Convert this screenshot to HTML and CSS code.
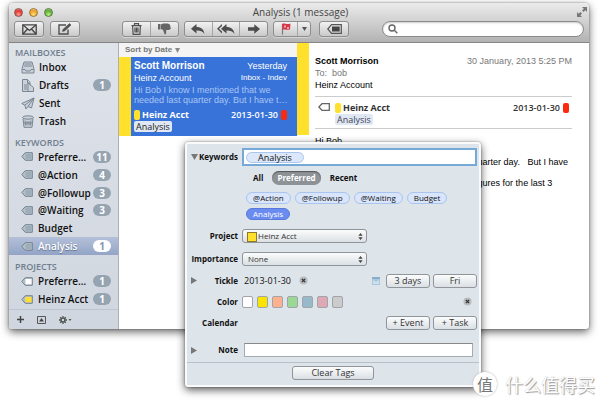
FILE: index.html
```html
<!DOCTYPE html>
<html lang="en">
<head>
<meta charset="utf-8">
<title>Analysis (1 message)</title>
<link rel="stylesheet" href="styles.css">
</head>
<body>
<svg class="defs" aria-hidden="true">
  <symbol id="tag" viewBox="0 0 12 9"><path d="M4.2.7h7.1v7.6H4.2L.8 4.5z" fill="#b3bfc9" stroke="#748391"/><path d="M4.5 2h6v5.2h-6z" fill="var(--tag, #9eadb8)"/></symbol>
  <symbol id="updown" viewBox="0 0 5 7"><path d="M2.5 0 4.6 2.7H.4zM2.5 7 4.6 4.3H.4z" fill="#444"/></symbol>
  <symbol id="clear" viewBox="0 0 10 10"><circle cx="5" cy="5" r="4.5" fill="#b9bcbe"/><path d="m3.2 3.2 3.6 3.6M6.8 3.2 3.2 6.8" stroke="#333" stroke-width="1.5"/></symbol>
</svg>

<main class="window">
  <header class="toolbar">
    <div class="titlebar">
      <div class="lights">
        <button class="light red" aria-label="Close"></button>
        <button class="light amber" aria-label="Minimize"></button>
        <button class="light green" aria-label="Zoom"></button>
      </div>
      <h1>Analysis (1 message)</h1>
      <button class="fullscreen" aria-label="Full screen">
        <svg width="10" height="10" viewBox="0 0 10 10" fill="#777"><path d="M5 0h5v5L8.300 3.300 6.500 5 5 3.500l1.800-1.800zM0 5l1.700 1.700L3.500 5 5 6.500 3.300 8.300 5 10H0z"/></svg>
      </button>
    </div>
    <div class="tools">
      <div class="group mail"><button aria-label="Get mail">
        <svg width="15" height="11" viewBox="0 0 15 11" fill="none" stroke="#444" stroke-width="1.300"><path d="M.8.8h13.400v9.400H.8z"/><path d="m1 1 6.500 5.500L14 1M1 10l4.500-5M14 10 9.500 5"/></svg></button></div>
      <div class="group compose"><button aria-label="New message">
        <svg width="14" height="12" viewBox="0 0 14 12" fill="none" stroke="#505050" stroke-width="1.400"><path d="M8 2H1v9h9V6.500"/><path d="m4.500 8.500.7-2.300L11.500.5 13 2 6.800 7.800z" fill="#505050" stroke-width=".6"/></svg></button></div>
      <div class="group remove"><button aria-label="Delete">
        <svg width="11" height="12" viewBox="0 0 11 12" fill="none" stroke="#505050" stroke-width="1.200"><path d="M.5 2.600h10M3.500 2.400V.7h4v1.700M1.600 3l.5 8.300h6.800L9.400 3M4 4.500v5M5.500 4.500v5M7 4.500v5"/></svg></button><button aria-label="Junk">
        <svg width="13" height="12" viewBox="0 0 13 12" fill="#666"><path d="M0 1h2.500v5.500H0zM3 1.500 5 .5h5l2 1.200.8 4L11 7H8.300L8 11.500 6.500 11 5 7 3 6z"/></svg></button></div>
      <div class="group reply"><button aria-label="Reply">
        <svg width="14" height="11" viewBox="0 0 14 11" fill="#4d4d4d"><path d="M5.500 0v3C10 3 13 5.500 13.500 10 11.500 7.200 9 6.500 5.500 6.600V9.500L0 4.800z"/></svg></button><button aria-label="Reply all">
        <svg width="18" height="11" viewBox="0 0 18 11" fill="#4d4d4d"><path d="M9.500 0v3C14 3 17 5.500 17.500 10 15.500 7.200 13 6.500 9.500 6.600V9.500L4 4.800zM5 0v2L2 4.800l3 2.800v1.900L0 4.800z"/></svg></button><button aria-label="Forward">
        <svg width="12" height="10" viewBox="0 0 12 10" fill="#4d4d4d"><path d="M0 3.300h6.300V.3L12 5 6.300 9.700v-3H0z"/></svg></button></div>
      <div class="group flag"><button aria-label="Flag">
        <svg width="10" height="12" viewBox="0 0 10 12"><path d="M1.500 1v10.500" stroke="#777" stroke-width="1.200"/><path d="M1 1c3-1.500 4 1 8.500-.5L9 6.500c-3.500 1-4.500-.8-7.500.5z" fill="#d8394a"/><path d="M3 2.500h2v2H3zM6 4h2v2H6z" fill="#f3a4aa"/></svg></button><button class="more" aria-label="Flag colours">
        <svg width="5" height="4" viewBox="0 0 5 4"><path d="M0 0h5L2.500 4z" fill="#555"/></svg></button></div>
      <div class="group tagger"><button aria-label="Tags">
        <svg width="15" height="10" viewBox="0 0 15 10"><path d="M4.500.7h9.800v8.600H4.500L.8 5z" fill="none" stroke="#555" stroke-width="1.200"/><path d="M5 2.400h7.700v5.200H5z" fill="#444"/></svg></button></div>
      <label class="search">
        <svg width="10" height="10" viewBox="0 0 10 10" fill="none" stroke="#666" stroke-width="1.400"><circle cx="4" cy="4" r="3"/><path d="m6.300 6.300 3 3"/></svg>
        <input type="search" aria-label="Search">
      </label>
    </div>
  </header>

  <div class="panes">
    <aside class="sidebar">
      <h2>MAILBOXES</h2>
      <ul class="mailboxes">
        <li><svg width="14" height="13" viewBox="0 0 14 13" fill="#cbd2db" stroke="#7a8591"><path d="m3 1h8l2 7v4H1V8z"/><path d="M3.500 3h7M3 5h8M1.500 8.500H4l1 1.500h4l1-1.500h2.500"/></svg><a href="#inbox">Inbox</a></li>
        <li><svg width="14" height="13" viewBox="0 0 14 13" fill="#cbd2db" stroke="#7a8591"><path d="M1.500.5h5l2.500 3v9h-7.500z"/><path d="m7 4 5.500 4.500v4H7zM6.500.5V4H9M3 6h3M3 8h3M3 10h3"/></svg><a href="#drafts">Drafts</a><span class="count">1</span></li>
        <li><svg width="14" height="13" viewBox="0 0 14 13" fill="#cbd2db" stroke="#7a8591"><path d="M13 1 .8 6.500l3 1.700L5 12l2-2.500L10.500 11z"/><path d="M13 1 3.800 8.200M13 1 7 9.500"/></svg><a href="#sent">Sent</a></li>
        <li><svg width="14" height="13" viewBox="0 0 14 13" fill="#cbd2db" stroke="#7a8591"><path d="M2 3.500 3 12.300h8l1-8.800"/><ellipse cx="7" cy="2.500" rx="5.500" ry="1.700"/><path d="m4 5.500.5 5M6 6v4.500M8 6v4.500M10 5.500l-.5 5M3 8h8"/></svg><a href="#trash">Trash</a></li>
      </ul>
      <h2>KEYWORDS</h2>
      <ul class="keywords">
        <li><svg class="tag"><use href="#tag"/></svg><a href="#preferred">Preferre…</a><span class="count">11</span></li>
        <li><svg class="tag"><use href="#tag"/></svg><a href="#action">@Action</a><span class="count">4</span></li>
        <li><svg class="tag"><use href="#tag"/></svg><a href="#followup">@Followup</a><span class="count">3</span></li>
        <li><svg class="tag"><use href="#tag"/></svg><a href="#waiting">@Waiting</a><span class="count">3</span></li>
        <li><svg class="tag"><use href="#tag"/></svg><a href="#budget">Budget</a></li>
        <li class="selected"><svg class="tag"><use href="#tag"/></svg><a href="#analysis">Analysis</a><span class="count">1</span></li>
      </ul>
      <h2>PROJECTS</h2>
      <ul class="projects">
        <li><svg class="tag white"><use href="#tag"/></svg><a href="#project-preferred">Preferre…</a><span class="count">1</span></li>
        <li><svg class="tag yellow"><use href="#tag"/></svg><a href="#heinz">Heinz Acct</a><span class="count">1</span></li>
      </ul>
      <div class="sidebar-tools">
        <button aria-label="Add"><svg width="7" height="7" viewBox="0 0 7 7"><path d="M3.500 0v7M0 3.500h7" stroke="#444" stroke-width="1.500"/></svg></button>
        <button aria-label="Activity"><svg width="9" height="8" viewBox="0 0 9 8"><path d="M.5.5h8v7h-8z" fill="none" stroke="#555"/><path d="M4.500 2 7 5.500H2z" fill="#444"/></svg></button>
        <button aria-label="Actions"><svg width="13" height="8" viewBox="0 0 13 8"><circle cx="4" cy="4" r="2" fill="none" stroke="#555" stroke-width="1.600"/><path d="M4 0v1.600M4 6.400V8M0 4h1.600M6.400 4H8M1.200 1.200l1.100 1.100M5.700 5.700l1.100 1.100M1.200 6.800l1.100-1.100M5.700 2.300l1.100-1.100" stroke="#555" stroke-width="1.300"/><path d="M9.500 3h3L11 5z" fill="#555"/></svg></button>
      </div>
    </aside>

    <section class="list">
      <button class="sort">Sort by Date <svg width="5" height="5" viewBox="0 0 5 5"><path d="M0 0h5L2.500 5z" fill="#888"/></svg></button>
      <article class="message">
        <div class="line"><strong>Scott Morrison</strong><time>Yesterday</time></div>
        <div class="line"><span>Heinz Account</span><span class="box">Inbox - Indev</span></div>
        <p>Hi Bob I know I mentioned that we<br>needed last quarter day. But I have t…</p>
        <div class="meta"><i class="swatch"></i><b>Heinz Acct</b><time>2013-01-30</time><i class="swatch due"></i></div>
        <span class="label">Analysis</span>
      </article>
    </section>

    <section class="detail">
      <article class="content">
        <header class="mail-head">
          <div class="line"><strong>Scott Morrison</strong><time>30 January, 2013 5:25 PM</time></div>
          <div class="to">To:&nbsp; bob</div>
          <div>Heinz Account</div>
        </header>
        <div class="tagline">
          <svg width="12" height="8" viewBox="0 0 12 8"><path d="M4 .7h7.300v6.600H4L.8 4z" fill="#fff" stroke="#666" stroke-width="1.300"/></svg>
          <div class="tags">
            <div class="meta"><i class="swatch"></i><b>Heinz Acct</b><time>2013-01-30</time><i class="swatch due"></i></div>
            <span class="label">Analysis</span>
          </div>
        </div>
        <div class="body">
          <p>Hi Bob</p>
          <p>I know I mentioned that we wanted last quarter day. &nbsp; But I have</p>
          <p>my update to prepare and will need the figures for the last 3</p>
        </div>
      </article>
    </section>
  </div>
</main>

<form class="popup">
  <div class="fields">
    <div class="row row-keywords">
      <div class="name"><svg width="7" height="6" viewBox="0 0 7 6"><path d="M0 0h7L3.500 6z" fill="#777"/></svg><label for="keywords">Keywords</label></div>
      <div class="token-field"><span class="token">Analysis</span><input id="keywords" type="text"></div>
    </div>
    <div class="tabs"><button type="button">All</button><button type="button" class="on">Preferred</button><button type="button">Recent</button></div>
    <div class="chips">
      <button type="button">@Action</button><button type="button">@Followup</button><button type="button">@Waiting</button><button type="button">Budget</button><button type="button" class="on">Analysis</button>
    </div>
    <div class="row row-select">
      <div class="name"><label for="project">Project</label></div>
      <div class="select has-swatch"><select id="project"><option>Heinz Acct</option></select><svg><use href="#updown"/></svg></div>
    </div>
    <div class="row row-select">
      <div class="name"><label for="importance">Importance</label></div>
      <div class="select"><select id="importance"><option>None</option></select><svg><use href="#updown"/></svg></div>
    </div>
    <div class="row">
      <div class="name"><svg width="6" height="7" viewBox="0 0 6 7"><path d="M0 0v7l6-3.500z" fill="#777"/></svg><span>Tickle</span></div>
      <div class="cell"><time>2013-01-30</time><button type="button" class="clear" aria-label="Clear tickle date"><svg><use href="#clear"/></svg></button>
        <button type="button" class="calendar" aria-label="Pick a date"><svg width="8" height="8" viewBox="0 0 8 8"><path d="M0 0h8v8H0z" fill="#a9c7df"/><path d="M0 0h8v2H0z" fill="#88aecb"/><path d="m1 3 3 2 3-2v4H1z" fill="#cfdfeb"/></svg></button>
        <button type="button" class="push">3 days</button><button type="button" class="push">Fri</button></div>
    </div>
    <div class="row">
      <div class="name"><span>Color</span></div>
      <div class="cell colors"><button type="button" class="c-white" aria-label="White"></button><button type="button" class="c-yellow" aria-label="Yellow"></button><button type="button" class="c-orange" aria-label="Orange"></button><button type="button" class="c-green" aria-label="Green"></button><button type="button" class="c-blue" aria-label="Blue"></button><button type="button" class="c-pink" aria-label="Pink"></button><button type="button" class="c-gray" aria-label="Gray"></button><button type="button" class="clear end" aria-label="Clear color"><svg><use href="#clear"/></svg></button></div>
    </div>
    <div class="row">
      <div class="name"><span>Calendar</span></div>
      <div class="cell events"><button type="button" class="push">+ Event</button><button type="button" class="push">+ Task</button></div>
    </div>
    <div class="row row-note">
      <div class="name"><svg width="6" height="7" viewBox="0 0 6 7"><path d="M0 0v7l6-3.500z" fill="#777"/></svg><label for="note">Note</label></div>
      <div class="cell"><input id="note" class="note" type="text"></div>
    </div>
  </div>
  <footer><button type="button" class="push wide">Clear Tags</button></footer>
</form>

<div class="watermark"><span class="seal">值</span><span>什么值得买</span></div>
</body>
</html>
```
FILE: styles.css
```css
* { box-sizing: border-box; }
body {
  position: relative;
  margin: 0;
  padding: 3px 11px 0 9px;
  min-height: 100vh;
  background: #fff;
  color: #111;
  font: 10px/12px "Open Sans", "Noto Sans", sans-serif;
  white-space: nowrap;
  overflow: hidden;
}
h1, h2, p, ul { margin: 0; padding: 0; font-size: inherit; }
ul { list-style: none; }
a { color: inherit; text-decoration: none; }
button, input, select { font: inherit; color: inherit; margin: 0; padding: 0; border: 0; background: none; outline: 0; min-width: 0; }
button { white-space: nowrap; }
svg { display: block; flex: none; }
.defs { position: absolute; width: 0; height: 0; }

.window { border-radius: 4px 4px 3px 3px; box-shadow: 0 3px 8px rgba(0,0,0,.6), 0 0 2px rgba(0,0,0,.4); overflow: hidden; background: #fff; }
.toolbar { height: 40px; background: linear-gradient(#ebebeb, #d2d2d2 45%, #b2b2b2); border-bottom: 1px solid #858585; }
.titlebar { display: grid; grid-template-columns: 1fr auto 1fr; align-items: center; height: 18px; padding: 0 2px 0 5px; }
h1 { color: #444; font-weight: 500; }
.lights { display: flex; gap: 6px; }
.light { width: 9px; height: 9px; border-radius: 50%; border: 1px solid #8c5550; }
.red { background: radial-gradient(circle at 50% 80%, #ff9c90, #e0322d 60%, #f3b5b0); }
.amber { background: radial-gradient(circle at 50% 80%, #ffe277, #eb9d25 60%, #fae0a5); border-color: #9c7434; }
.green { background: radial-gradient(circle at 50% 80%, #c2ee86, #5ba836 60%, #cfe8b5); border-color: #55803f; }
.fullscreen { justify-self: end; }
.tools { display: flex; align-items: center; padding: 0 5px; }
.group { display: flex; height: 16px; border: 1px solid #8e8e8e; border-radius: 3px; background: linear-gradient(#f2f2f2, #c9c9c9); box-shadow: 0 1px 0 rgba(255,255,255,.4); }
.group button { display: flex; flex: 1; align-items: center; justify-content: center; }
.group button + button { border-left: 1px solid #a5a5a5; }
.mail, .compose, .tagger { width: 30px; }
.compose { margin-left: 6px; }
.remove { width: 57px; margin-left: 42px; }
.reply { width: 84px; margin-left: 5px; }
.flag { width: 38px; margin-left: 5px; }
.flag .more { flex: none; width: 13px; }
.tagger { margin-left: 8px; }
.search { display: flex; flex: 1; align-items: center; gap: 3px; height: 16px; margin-left: 33px; padding: 0 5px; border: 1px solid #8b8b8b; border-radius: 8px; background: #fff; box-shadow: inset 0 1px 2px rgba(0,0,0,.2); }
.search input { flex: 1; }

.panes { display: flex; min-height: 286px; }
.sidebar { display: flex; flex-direction: column; width: 110px; border-right: 1px solid #aab0b8; background: linear-gradient(#dfe3ea, #d0d6df); font-weight: 600; }
.sidebar h2 { padding: 0 6px; height: 15px; line-height: 19px; font-size: 9px; font-weight: 600; color: #6f7d8d; }
.sidebar li { display: flex; align-items: center; height: 18px; padding: 0 7px 0 12px; }
.sidebar a { flex: 1; padding-left: 5px; }
.sidebar .mailboxes a { padding-left: 4px; }
.mailboxes { margin-bottom: 3px; }
.keywords { display: grid; height: 107px; margin-bottom: 2px; }
.sidebar .keywords li { height: auto; }
.tag { width: 12px; height: 9px; }
.white { --tag: #fff; }
.yellow { --tag: #ffe02d; }
.count { width: 18px; height: 12px; border-radius: 6px; background: #96a4b2; color: #fff; font-weight: 700; text-align: center; }
.selected { background: linear-gradient(#b4c0d9, #93a4c6); color: #fff; text-shadow: 0 1px 1px #5d6c89; }
.selected .count { background: #fff; color: #8292b5; text-shadow: none; }
.sidebar-tools { display: flex; flex: 1; align-items: center; gap: 13px; margin-top: 1px; padding: 0 8px; border-top: 1px solid #bec6d4; }

.list { width: 178px; font-family: "Liberation Sans", sans-serif; font-size: 9px; line-height: 10px; }
.sort { display: flex; align-items: center; gap: 3px; width: 100%; height: 14px; padding: 0 6px; background: #f4f4f4; color: #777; font-size: 8px; font-weight: 700; }
.message { height: 79px; padding: 3px 10px 0 3px; border-left: 12px solid #ffe02d; background: #3873d9; color: #fff; }
.line { display: flex; justify-content: space-between; line-height: 12px; }
.message strong { font-size: 10px; }
.message .box { font-size: 8px; }
.message p { padding-top: 1px; color: #a9c5f5; }
.meta { display: flex; align-items: center; height: 13px; font: 9px/13px "Open Sans", sans-serif; }
.meta b { flex: 1; }
.meta time { font-size: 9px; font-weight: 600; }
.message .meta { margin-top: 3px; }
.swatch { width: 6px; height: 10px; margin-right: 2px; border-radius: 2px; background: #ffe02d; }
.due { margin: 0 0 0 3px; background: #fb2a0e; }
.label { display: inline-block; padding: 0 2px; border-radius: 2px; background: #dfe8f3; color: #222; font: 500 9px/11px "Open Sans", sans-serif; vertical-align: top; }

.detail { flex: 1; min-width: 0; font-family: "Liberation Sans", sans-serif; font-size: 9px; background: linear-gradient(#ffe02d, #ffe02d) 0 0 / 12px 92px no-repeat; }
.content { padding: 12px 17px 0 18px; }
.mail-head { padding-bottom: 5px; color: #000; }
.mail-head time, .to { color: #777; }
.tagline { display: flex; align-items: flex-start; gap: 5px; padding: 4px 3px 3px; border: solid #ccc; border-width: 1px 0; }
.tagline svg { margin-top: 2px; }
.tags { flex: 1; height: 24px; }
.tags b, .tags time { color: #333; }
.tags .label { color: #445; }
.body { padding-top: 6px; color: #000; }
.body p { margin-bottom: 9px; }

.popup { position: absolute; top: 142px; left: 185px; right: 119px; border: 2px solid #f8fafb; border-radius: 3px; background: #dde4ea; box-shadow: 0 3px 8px rgba(0,0,0,.65), 0 0 2px rgba(0,0,0,.4); font-size: 9px; }
.fields { padding: 4px 2px 0 4px; }
.row { display: grid; grid-template-columns: 47px 1fr; column-gap: 4px; align-items: center; height: 21px; }
.name { display: flex; align-items: center; justify-content: space-between; font-size: 8px; font-weight: 700; }
.name > :only-child { margin-left: auto; }
.token-field { display: flex; align-items: center; height: 18px; padding: 0 2px; border: 2px solid #76a9d8; background: #fff; }
.token-field input { flex: 1; }
.token { padding: 0 11px; border: 1px solid #a9c6ef; border-radius: 6px; background: #dce8fa; line-height: 9px; font-weight: 500; }
.row-keywords { height: 18px; }
.tabs { display: flex; align-items: center; gap: 9px; height: 24px; padding-left: 62px; font-size: 8px; }
.tabs button { font-weight: 700; }
.tabs .on { height: 14px; padding: 0 5px; border-radius: 7px; background: #8d9297; box-shadow: inset 0 1px 1px #555; color: #fff; }
.chips { display: flex; flex-wrap: wrap; gap: 4px; padding: 2px 16px 4px 55px; font-size: 8px; }
.chips button { height: 12px; padding: 0 6px; border: 1px solid #aac4f0; border-radius: 6px; background: #d8e5fa; line-height: 10px; font-weight: 500; }
.chips .on { background: #6a8bf0; border-color: #5878dc; color: #fff; }
.row-select { height: 23px; }
.select { position: relative; width: 125px; }
.select select { display: block; width: 100%; height: 14px; padding: 0 5px; border: 1px solid #8f959b; border-radius: 3px; background: linear-gradient(#fbfcfc, #dbe0e4); appearance: none; color: #333; font-size: 8px; font-weight: 500; line-height: 12px; }
.select svg { position: absolute; right: 4px; top: 4px; width: 5px; height: 7px; pointer-events: none; }
.select.has-swatch select { padding-left: 15px; }
.has-swatch::before { content: ""; position: absolute; left: 5px; top: 3px; width: 8px; height: 8px; border: 1px solid #8d7b2d; background: #ffe02d; }
.cell { display: flex; align-items: center; padding-left: 2px; }
.cell time { font-weight: 500; }
.clear svg { width: 9px; height: 9px; }
.clear { margin-left: 8px; }
.calendar { margin-left: auto; margin-right: 6px; }
.push { height: 14px; width: 44px; border: 1px solid #8f959b; border-radius: 3px; background: linear-gradient(#fbfcfc, #dbe0e4); color: #333; font-weight: 500; line-height: 12px; }
.push + .push { margin-left: 3px; }
.colors { gap: 4px; padding-left: 0; }
.colors > :not(.clear) { width: 11px; height: 12px; border: 1px solid #a0a5a9; border-radius: 2px; }
.c-white { background: #fff; }
.c-yellow { background: #fbe500; }
.c-orange { background: #ffb18f; }
.c-green { background: #9bd894; }
.c-blue { background: #98b8cb; }
.c-pink { background: #dea8b4; }
.c-gray { background: #cbcbcb; }
.end { margin: 0 5px 0 auto; }
.events { justify-content: flex-end; }
.row-note { height: 24px; margin-top: 5px; }
.note { flex: 1; height: 14px; margin-right: 4px; border: 1px solid #a4abb1; border-top-color: #888; background: #fff; }
.popup footer { display: flex; justify-content: center; padding: 3px 4px 5px; border-top: 1px solid #b9c1c8; }
.popup .wide { width: 82px; }

.watermark { position: absolute; right: 5px; bottom: 5px; display: flex; align-items: center; gap: 8px; color: #fff; font: 18px/24px "Noto Sans CJK SC", sans-serif; text-shadow: 1px 1px 1px #999, 0 0 1px #bbb; }
.seal { width: 24px; height: 24px; border-radius: 50%; background: #fff; box-shadow: 0 0 2px #aaa; color: #777; text-align: center; font-size: 16px; text-shadow: none; }
```
